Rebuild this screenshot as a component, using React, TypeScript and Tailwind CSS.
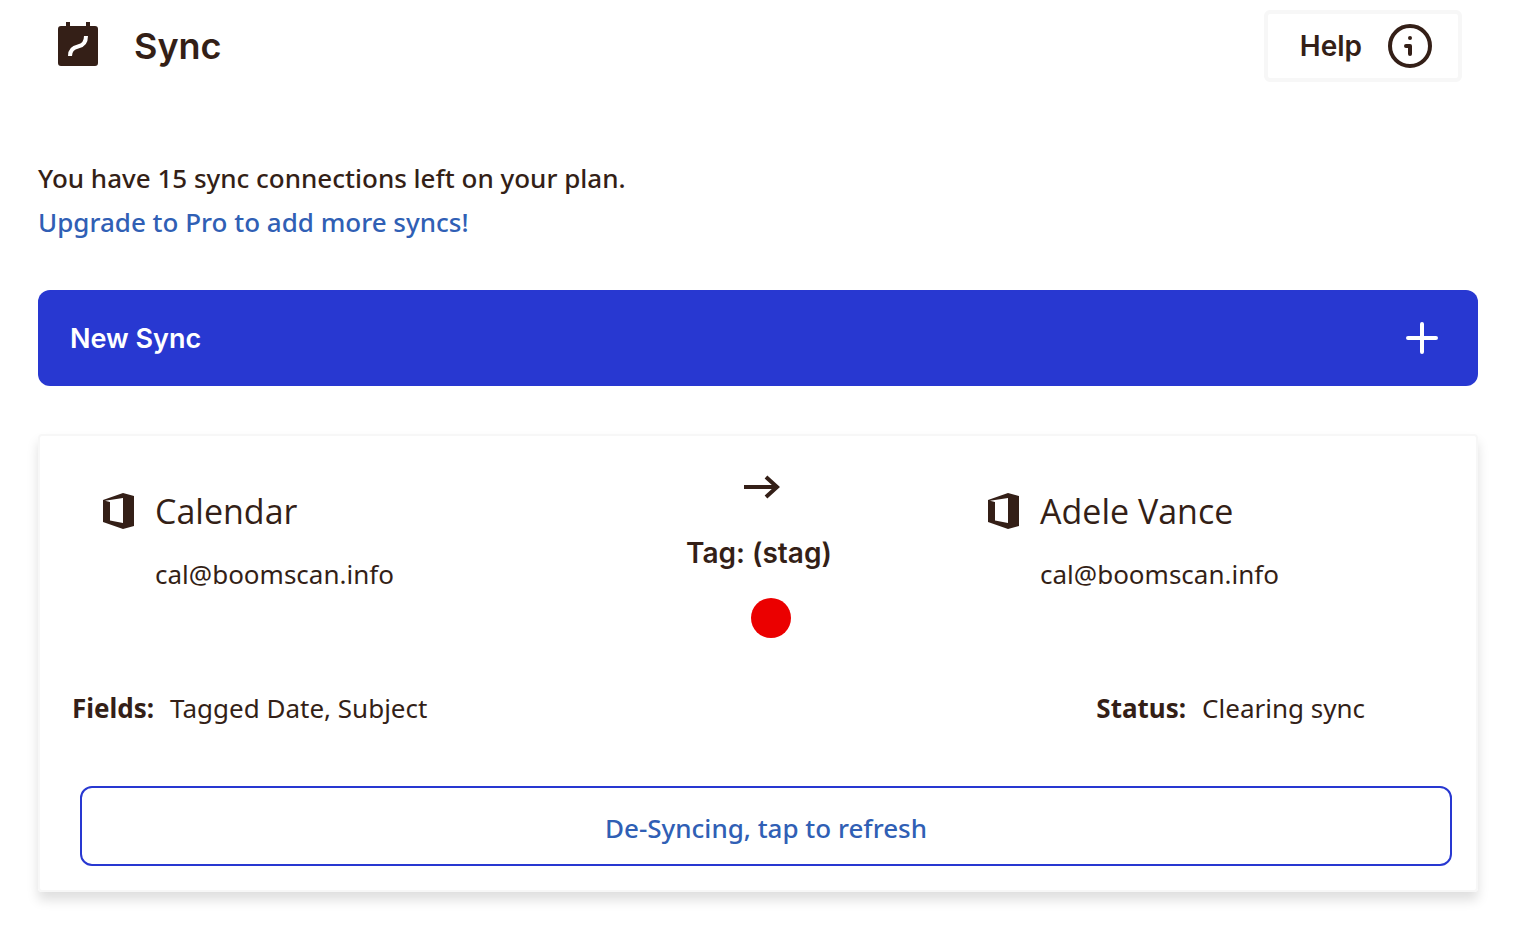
import React from "react";

function CalendarLogo() {
  return (
    <svg width="40" height="44" viewBox="0 0 40 44" fill="none" aria-hidden="true">
      <path d="M8 0h4v4h16V0h4v4h5a3 3 0 0 1 3 3v34a3 3 0 0 1-3 3H3a3 3 0 0 1-3-3V7a3 3 0 0 1 3-3h5z" fill="#341f17" />
      <path d="M12 34c0-6 3-8.500 8-9.500 5.500-1 8-4 8-10.500" stroke="#fff" strokeWidth="4" />
    </svg>
  );
}

function InfoIcon() {
  return (
    <svg width="44" height="44" viewBox="0 0 44 44" fill="none" stroke="#341f17" aria-hidden="true">
      <circle cx="22" cy="22" r="20" strokeWidth="4" />
      <path d="M18 22h4v8" strokeWidth="4" strokeLinecap="round" strokeLinejoin="round" />
      <circle cx="22" cy="14" r="2" fill="#341f17" stroke="none" />
    </svg>
  );
}

function OfficeIcon() {
  return (
    <svg width="32" height="36" viewBox="0 0 32 36" className="shrink-0" aria-hidden="true">
      <path fillRule="evenodd" d="M0 7 20 0l11 3v30l-11 3L0 29zM7 9v18.500L20 30V5L2 7.800z" fill="#341f17" />
    </svg>
  );
}

function Account({ name, email }: { name: string; email: string }) {
  return (
    <div className="flex gap-5 pt-8">
      <div className="pt-[25px]">
        <OfficeIcon />
      </div>
      <div className="pt-4">
        <h2 className="font-['Open_Sans',sans-serif] text-[34px] leading-[54px]">{name}</h2>
        <p className="mt-4 text-[26px] leading-10">{email}</p>
      </div>
    </div>
  );
}

export default function App() {
  return (
    <div className="bg-white pr-[39px] pl-[38px] pt-[10px] pb-8 font-['Noto_Sans','Open_Sans',sans-serif] text-[#341f17]">
      <header className="flex items-center justify-between pr-4 pl-5">
        <div className="flex items-center gap-9">
          <div className="pb-1">
            <CalendarLogo />
          </div>
          <h1 className="font-['Inter',sans-serif] text-4xl font-semibold">Sync</h1>
        </div>
        <button className="flex h-[72px] items-center gap-[26px] rounded-md border-4 border-[#f7f7f7] pr-[26px] pl-8 font-['Inter',sans-serif] text-[28px] font-semibold">
          Help
          <InfoIcon />
        </button>
      </header>

      <section className="mt-[74px] text-[26px] leading-[44px] font-medium">
        <p>You have 15 sync connections left on your plan.</p>
        <a href="#upgrade" className="text-[#305fb5]">Upgrade to Pro to add more syncs!</a>
      </section>

      <button className="mt-[46px] flex h-24 w-full items-center justify-between rounded-xl bg-[#2838d1] pr-10 pl-8 font-['Inter',sans-serif] text-[27px] font-semibold text-white">
        <span className="pt-0.5">New Sync</span>
        <svg width="32" height="32" viewBox="0 0 32 32" stroke="currentColor" strokeWidth="4" strokeLinecap="round" aria-hidden="true">
          <path d="M16 2v28M2 16h28" />
        </svg>
      </button>

      <article className="mt-12 rounded-sm border-2 border-[#f7f7f7] pb-6 shadow-[0_8px_12px_rgba(0,0,0,0.13)]">
        <div className="grid grid-cols-[583px_1fr_488px] pl-[63px]">
          <Account name="Calendar" email="cal@boomscan.info" />
          <div className="flex flex-col pt-[39px] font-['Inter',sans-serif]">
            <svg width="38" height="24" viewBox="0 0 38 24" fill="none" stroke="#341f17" strokeWidth="4" className="ml-[57px]" aria-hidden="true">
              <path d="M1 12h33M23 2l11 10-11 10" />
            </svg>
            <p className="mt-[34px] text-[28px] leading-10 font-semibold whitespace-nowrap">Tag: (stag)</p>
            <span className="mt-[25px] ml-[65px] size-10 rounded-full bg-[#eb0000]" />
          </div>
          <Account name="Adele Vance" email="cal@boomscan.info" />
        </div>

        <div className="mt-12 flex justify-between pr-[111px] pl-8 text-[26px] leading-[44px]">
          <p><strong className="mr-4">Fields:</strong>Tagged Date, Subject</p>
          <p><strong className="mr-4">Status:</strong>Clearing sync</p>
        </div>

        <div className="mt-14 pr-6 pl-10">
          <button className="h-20 w-full rounded-xl border-2 border-[#2838d1] pt-1 text-[26px] font-medium text-[#305fb5]">
            De-Syncing, tap to refresh
          </button>
        </div>
      </article>
    </div>
  );
}
